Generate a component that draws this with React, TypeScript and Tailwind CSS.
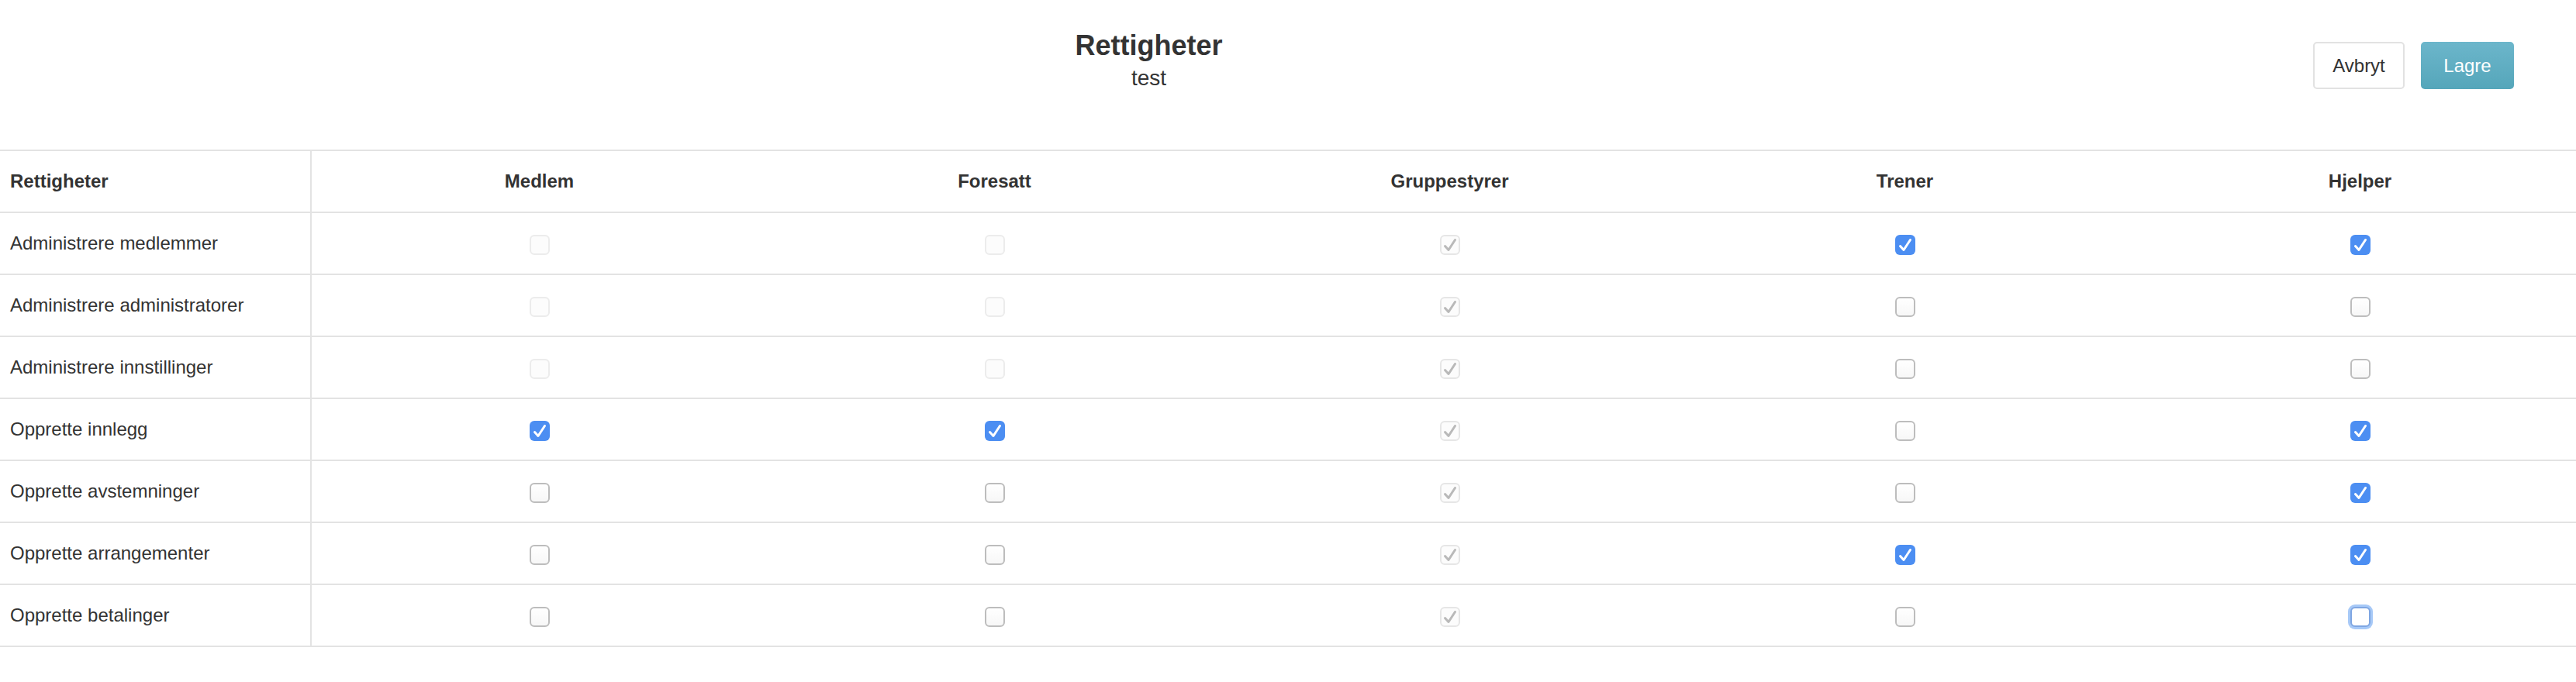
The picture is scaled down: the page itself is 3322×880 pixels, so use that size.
import React from "react";

type State = "dis" | "disChecked" | "off" | "on" | "focus";

const columns = ["Medlem", "Foresatt", "Gruppestyrer", "Trener", "Hjelper"];

const rows: { label: string; cells: State[] }[] = [
  { label: "Administrere medlemmer", cells: ["dis", "dis", "disChecked", "on", "on"] },
  { label: "Administrere administratorer", cells: ["dis", "dis", "disChecked", "off", "off"] },
  { label: "Administrere innstillinger", cells: ["dis", "dis", "disChecked", "off", "off"] },
  { label: "Opprette innlegg", cells: ["on", "on", "disChecked", "off", "on"] },
  { label: "Opprette avstemninger", cells: ["off", "off", "disChecked", "off", "on"] },
  { label: "Opprette arrangementer", cells: ["off", "off", "disChecked", "on", "on"] },
  { label: "Opprette betalinger", cells: ["off", "off", "disChecked", "off", "focus"] },
];

function Check({ color }: { color: string }) {
  return (
    <svg width="26" height="26" viewBox="0 0 26 26" className="absolute left-0 top-0">
      <path d="M6.5 14.5 L11 19.5 L19.5 6.5" fill="none" stroke={color} strokeWidth="3" strokeLinecap="round" strokeLinejoin="round" />
    </svg>
  );
}

function Box({ s }: { s: State }) {
  if (s === "on") {
    return (
      <div className="relative mt-[4px] h-[26px] w-[26px] rounded-[6px] bg-[#4c8ef2]">
        <Check color="#ffffff" />
      </div>
    );
  }
  if (s === "disChecked") {
    return (
      <div className="relative mt-[4px] h-[26px] w-[26px] rounded-[6px] border-2 border-[#e6e6e6] bg-[#fcfcfc]">
        <svg width="26" height="26" viewBox="0 0 26 26" className="absolute left-[-2px] top-[-2px]">
          <path d="M6.5 14.5 L11 19.5 L19.5 6.5" fill="none" stroke="#b9b9b9" strokeWidth="3" strokeLinecap="round" strokeLinejoin="round" />
        </svg>
      </div>
    );
  }
  if (s === "dis") {
    return <div className="mt-[4px] h-[26px] w-[26px] rounded-[6px] border-2 border-[#ececec] bg-[#fcfcfc]" />;
  }
  if (s === "focus") {
    return (
      <div className="mt-[4px] h-[26px] w-[26px] rounded-[6px] border-2 border-[#7fa6e2] bg-white shadow-[0_0_0_3px_#a7c9f7]" />
    );
  }
  return <div className="mt-[4px] h-[26px] w-[26px] rounded-[6px] border-2 border-[#bdbdbd] bg-gradient-to-b from-white to-[#f7f7f7]" />;
}

export default function App() {
  return (
    <div
      className="w-full overflow-hidden bg-white text-[#333333]"
      style={{ fontFamily: '"Liberation Sans", Arial, Helvetica, sans-serif' }}
    >
      <div className="flex h-[193px] pr-[80px] pt-[39px]">
        <div className="flex flex-1 flex-col items-center">
          <div className="text-[36px] font-bold leading-[40px]">Rettigheter</div>
          <div className="mt-[6px] text-[28px] leading-[32px]">test</div>
        </div>
        <div className="ml-[20px] mt-[15px] flex gap-[21px]">
          <button className="flex h-[61px] w-[118px] items-center justify-center rounded-[5px] border-2 border-[#e2e2e2] bg-white text-[24px] text-[#333333]">
            Avbryt
          </button>
          <button className="flex h-[61px] w-[120px] items-center justify-center rounded-[5px] bg-gradient-to-b from-[#6cb6cb] to-[#55a6ba] text-[24px] text-white">
            Lagre
          </button>
        </div>
      </div>
      <div className="w-[3337px] border-t-2 border-[#e3e3e3]">
        <div className="grid grid-cols-[402px_repeat(5,587px)] border-b-2 border-[#e3e3e3]">
          <div className="flex h-[78px] items-center border-r-2 border-[#e3e3e3] pl-[13px] text-[24px] font-bold leading-[28px]">
            Rettigheter
          </div>
          {columns.map((c) => (
            <div key={c} className="flex h-[78px] items-center justify-center text-[24px] font-bold leading-[28px]">
              {c}
            </div>
          ))}
        </div>
        {rows.map((r) => (
          <div key={r.label} className="grid grid-cols-[402px_repeat(5,587px)] border-b-2 border-[#e3e3e3]">
            <div className="flex h-[78px] items-center border-r-2 border-[#e3e3e3] pl-[13px] text-[24px] leading-[28px]">
              {r.label}
            </div>
            {r.cells.map((s, i) => (
              <div key={i} className="flex h-[78px] items-center justify-center">
                <Box s={s} />
              </div>
            ))}
          </div>
        ))}
      </div>
      <div className="h-[45px]" />
    </div>
  );
}
